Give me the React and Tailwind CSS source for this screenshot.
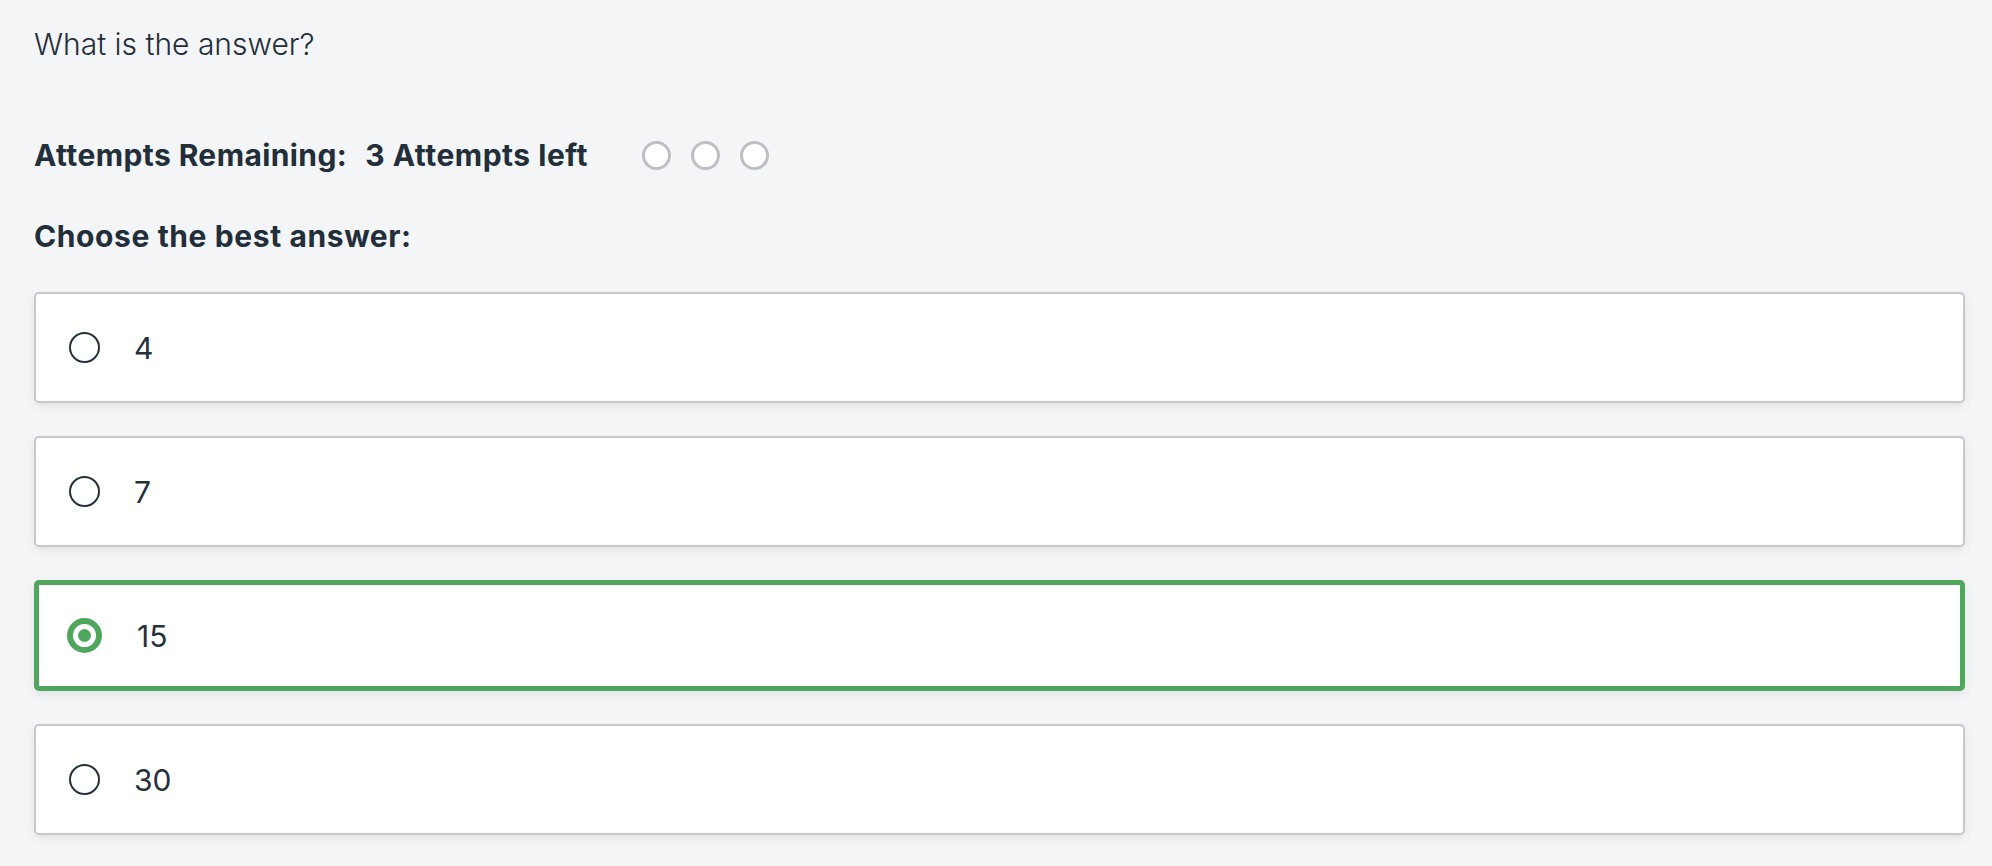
import { useState } from 'react'

const options = ['4', '7', '15', '30']

function Radio({ checked }) {
  return (
    <span className="flex h-[36px] w-[36px] shrink-0 items-center justify-center">
      {checked ? (
        <span className="flex h-[35px] w-[35px] items-center justify-center rounded-full border-[6px] border-[#4fa75e]">
          <span className="h-[13px] w-[13px] rounded-full bg-[#4fa75e]" />
        </span>
      ) : (
        <span className="h-[31px] w-[31px] rounded-full border-2 border-[#25313c] bg-white" />
      )}
    </span>
  )
}

function OptionCard({ label, selected, onSelect }) {
  // selected card has a thicker green border, so padding shrinks to keep the radio in place
  return (
    <button
      onClick={onSelect}
      className={
        selected
          ? 'flex h-[111px] w-full items-center rounded-[5px] border-[5px] border-[#4fa75e] bg-white pl-[27px] text-left shadow-[0_3px_8px_rgba(0,0,0,0.08)]'
          : 'flex h-[111px] w-full items-center rounded-[5px] border-2 border-[#c6c8cb] bg-white pl-[30px] text-left shadow-[0_3px_8px_rgba(0,0,0,0.08)]'
      }
    >
      <Radio checked={selected} />
      <span className={selected ? 'ml-[35px] text-[30px] leading-none text-[#25313c]' : 'ml-[32px] text-[30px] leading-none text-[#25313c]'}>
        {label}
      </span>
    </button>
  )
}

export default function App() {
  const [selected, setSelected] = useState('15')
  const attempts = 3

  return (
    <div
      className="min-h-screen bg-[#f4f5f7] px-[27px] pt-[22px] pb-[30px] text-[#222e39]"
      style={{ fontFamily: 'Inter, "Noto Sans", sans-serif' }}
    >
      <div className="px-[7px]">
        <p className="text-[30px] font-light leading-[44px]">What is the answer?</p>

        <div className="mt-[67px] flex items-center">
          <span className="text-[30px] font-bold leading-[44px] tracking-[0.4px]">Attempts Remaining:</span>
          <span className="ml-[18px] text-[30px] font-bold leading-[44px] tracking-[0.5px]">{attempts} Attempts left</span>
          <div className="ml-[54px] flex gap-[20px]">
            {Array.from({ length: attempts }).map((_, i) => (
              <span key={i} className="h-[29px] w-[29px] rounded-full border-[3px] border-[#bcc0c5] bg-white" />
            ))}
          </div>
        </div>

        <p className="mt-[37px] text-[30px] font-bold leading-[44px] tracking-[0.6px]">Choose the best answer:</p>
      </div>

      <div className="mt-[34px] flex flex-col gap-[33px] pl-[7px]">
        {options.map((opt) => (
          <OptionCard
            key={opt}
            label={opt}
            selected={selected === opt}
            onSelect={() => setSelected(opt)}
          />
        ))}
      </div>
    </div>
  )
}
